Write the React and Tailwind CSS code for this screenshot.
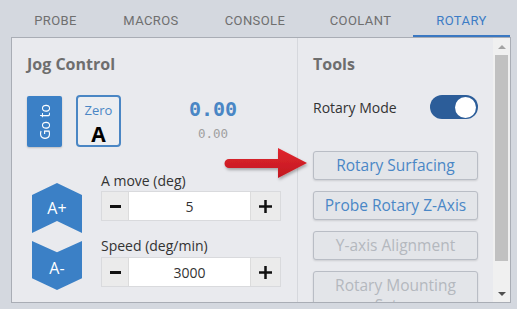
import React from "react";

function Tab({ label, w, active }) {
  return (
    <div
      className={
        "h-full flex items-center justify-center pt-[6px] border-b-2 font-['Roboto',sans-serif] text-[13px] tracking-[0.4px] " +
        (active ? "border-[#3a78c2] text-[#3d7cc5]" : "border-transparent text-[#6f6f6f]")
      }
      style={{ width: w }}
    >
      {label}
    </div>
  );
}

function Stepper({ value }) {
  return (
    <div className="flex h-[30px] w-[180px] border border-[#d9dadd]">
      <div className="w-[27px] bg-[#ebebeb] flex items-center justify-center border-r border-[#dcdcdc]">
        <div className="w-[11px] h-[3px] bg-[#111]" />
      </div>
      <div className="flex-1 bg-white flex items-center justify-center text-[14px] text-[#333]">{value}</div>
      <div className="w-[30px] bg-[#ebebeb] flex items-center justify-center border-l border-[#dcdcdc]">
        <svg width="13" height="13" viewBox="0 0 13 13">
          <rect x="0" y="5.25" width="13" height="2.5" fill="#111" />
          <rect x="5.25" y="0" width="2.5" height="13" fill="#111" />
        </svg>
      </div>
    </div>
  );
}

function ToolBtn({ children, disabled, tall }) {
  return (
    <div
      className={
        "w-full rounded-[3px] border border-[#b9bdc5] bg-[#e3e5e9] shadow-[0_1px_2px_rgba(0,0,0,0.12)] flex items-start justify-center text-center text-[15.5px] " +
        (tall ? "leading-[20px] pt-[3px] h-[50px] " : "h-[29px] leading-[27px] ") +
        (disabled ? "text-[#b4b8be]" : "text-[#4a87c6]")
      }
    >
      {children}
    </div>
  );
}

export default function App() {
  return (
    <div className="w-[517px] h-[309px] bg-[#d4d8df] relative overflow-hidden font-['Open_Sans',sans-serif]">
      {/* tabs */}
      <div className="flex h-[37px] pl-[11px]">
        <Tab label="PROBE" w={89} />
        <Tab label="MACROS" w={102} />
        <Tab label="CONSOLE" w={106} />
        <Tab label="COOLANT" w={105} />
        <Tab label="ROTARY" w={97} active />
      </div>

      {/* panel */}
      <div className="ml-[11px] w-[500px] h-[266px] border border-[#a9adb5] bg-[#e9eaee] flex overflow-hidden">
        {/* left column */}
        <div className="w-[285px] pl-[15px] pt-[14px] shrink-0">
          <div className="text-[16px] font-bold leading-6 text-[#6e6e6e]">Jog Control</div>
          <div className="flex items-start mt-[19px]">
            <div className="mt-px w-[35px] h-[51px] bg-[#3b80c6] rounded-[2px] shadow-[0_1px_2px_rgba(0,0,0,0.2)] flex items-center justify-center">
              <span className="[writing-mode:vertical-rl] rotate-180 text-white text-[14px] leading-none">Go to</span>
            </div>
            <div className="ml-[14px] w-[45px] h-[52px] border-2 border-[#4a86c4] rounded-[4px] bg-[#eceef1] flex flex-col items-center">
              <div className="pt-[5px] text-[13px] leading-4 text-[#4a86c5]">Zero</div>
              <div className="mt-[6px] text-[21px] leading-[20px] font-bold text-black">A</div>
            </div>
            <div className="ml-[62px] w-[60px] flex flex-col items-center">
              <div className="pt-[2px] font-['DejaVu_Sans_Mono',monospace] font-bold text-[20px] leading-6 text-[#4a86c5]">0.00</div>
              <div className="mt-[5px] font-['DejaVu_Sans_Mono',monospace] text-[12.5px] leading-4 text-[#a0a0a0]">0.00</div>
            </div>
          </div>
          <div className="flex mt-[24px]">
            <div className="ml-[5px] pt-[12px] flex flex-col w-[50px]">
              <div className="h-[50px] w-[50px] bg-[#3b80c6] [clip-path:polygon(50%_0,100%_24%,100%_100%,50%_76%,0_100%,0_24%)] flex items-center justify-center text-white text-[16px]">
                A+
              </div>
              <div className="mt-[8px] h-[49px] w-[50px] bg-[#3b80c6] [clip-path:polygon(0_0,50%_23%,100%_0,100%_76%,50%_100%,0_76%)] flex items-center justify-center pt-[5px] text-white text-[16px]">
                A-
              </div>
            </div>
            <div className="ml-[19px] flex flex-col">
              <div className="h-5 text-[14px] leading-5 text-[#333]">A move (deg)</div>
              <Stepper value="5" />
              <div className="mt-[15px] h-5 text-[14px] leading-5 text-[#333]">Speed (deg/min)</div>
              <div className="mt-px">
                <Stepper value="3000" />
              </div>
            </div>
          </div>
        </div>

        {/* right column */}
        <div className="w-[196px] shrink-0 border-l border-[#d6d8dd] pl-[15px] pr-[15px] pt-[14px]">
          <div className="text-[16px] font-bold leading-6 text-[#6e6e6e]">Tools</div>
          <div className="mt-[19px] h-[24px] flex items-center justify-between">
            <span className="text-[14px] text-[#333]">Rotary Mode</span>
            <div className="w-[48px] h-[24px] rounded-full bg-[#2c5d99] flex items-center justify-end pr-[2px]">
              <div className="w-[21px] h-[21px] rounded-full bg-white" />
            </div>
          </div>
          <div className="mt-[32px] flex flex-col gap-[11px]">
            <ToolBtn>Rotary Surfacing</ToolBtn>
            <ToolBtn>Probe Rotary Z-Axis</ToolBtn>
            <ToolBtn disabled>Y-axis Alignment</ToolBtn>
            <ToolBtn disabled tall>
              Rotary Mounting
              <br />
              Setup
            </ToolBtn>
          </div>
        </div>

        {/* scrollbar */}
        <div className="w-[17px] shrink-0 bg-[#f0f0f0] flex flex-col">
          <div className="h-[17px] flex items-center justify-center">
            <div className="w-0 h-0 border-l-[4px] border-r-[4px] border-b-[4px] border-l-transparent border-r-transparent border-b-[#a3a3a3]" />
          </div>
          <div className="mx-[2px] h-[206px] bg-[#c1c1c1]" />
          <div className="flex-1" />
          <div className="h-[17px] flex items-center justify-center">
            <div className="w-0 h-0 border-l-[4px] border-r-[4px] border-t-[4px] border-l-transparent border-r-transparent border-t-[#505050]" />
          </div>
        </div>
      </div>

      {/* red arrow annotation */}
      <svg className="absolute left-[220px] top-[144px]" width="92" height="40" viewBox="0 0 92 40">
        <defs>
          <filter id="sh" x="-10%" y="-20%" width="130%" height="150%">
            <feDropShadow dx="1" dy="2" stdDeviation="1.5" floodColor="#000" floodOpacity="0.3" />
          </filter>
          <linearGradient id="rg" x1="0" y1="0" x2="0" y2="1">
            <stop offset="0" stopColor="#e0262f" />
            <stop offset="1" stopColor="#c21820" />
          </linearGradient>
        </defs>
        <g filter="url(#sh)" fill="url(#rg)">
          <path d="M9 15 H58 V4 L87 19 L58 34 V24 H9 A4.5 4.5 0 0 1 9 15 Z" />
        </g>
      </svg>
    </div>
  );
}
